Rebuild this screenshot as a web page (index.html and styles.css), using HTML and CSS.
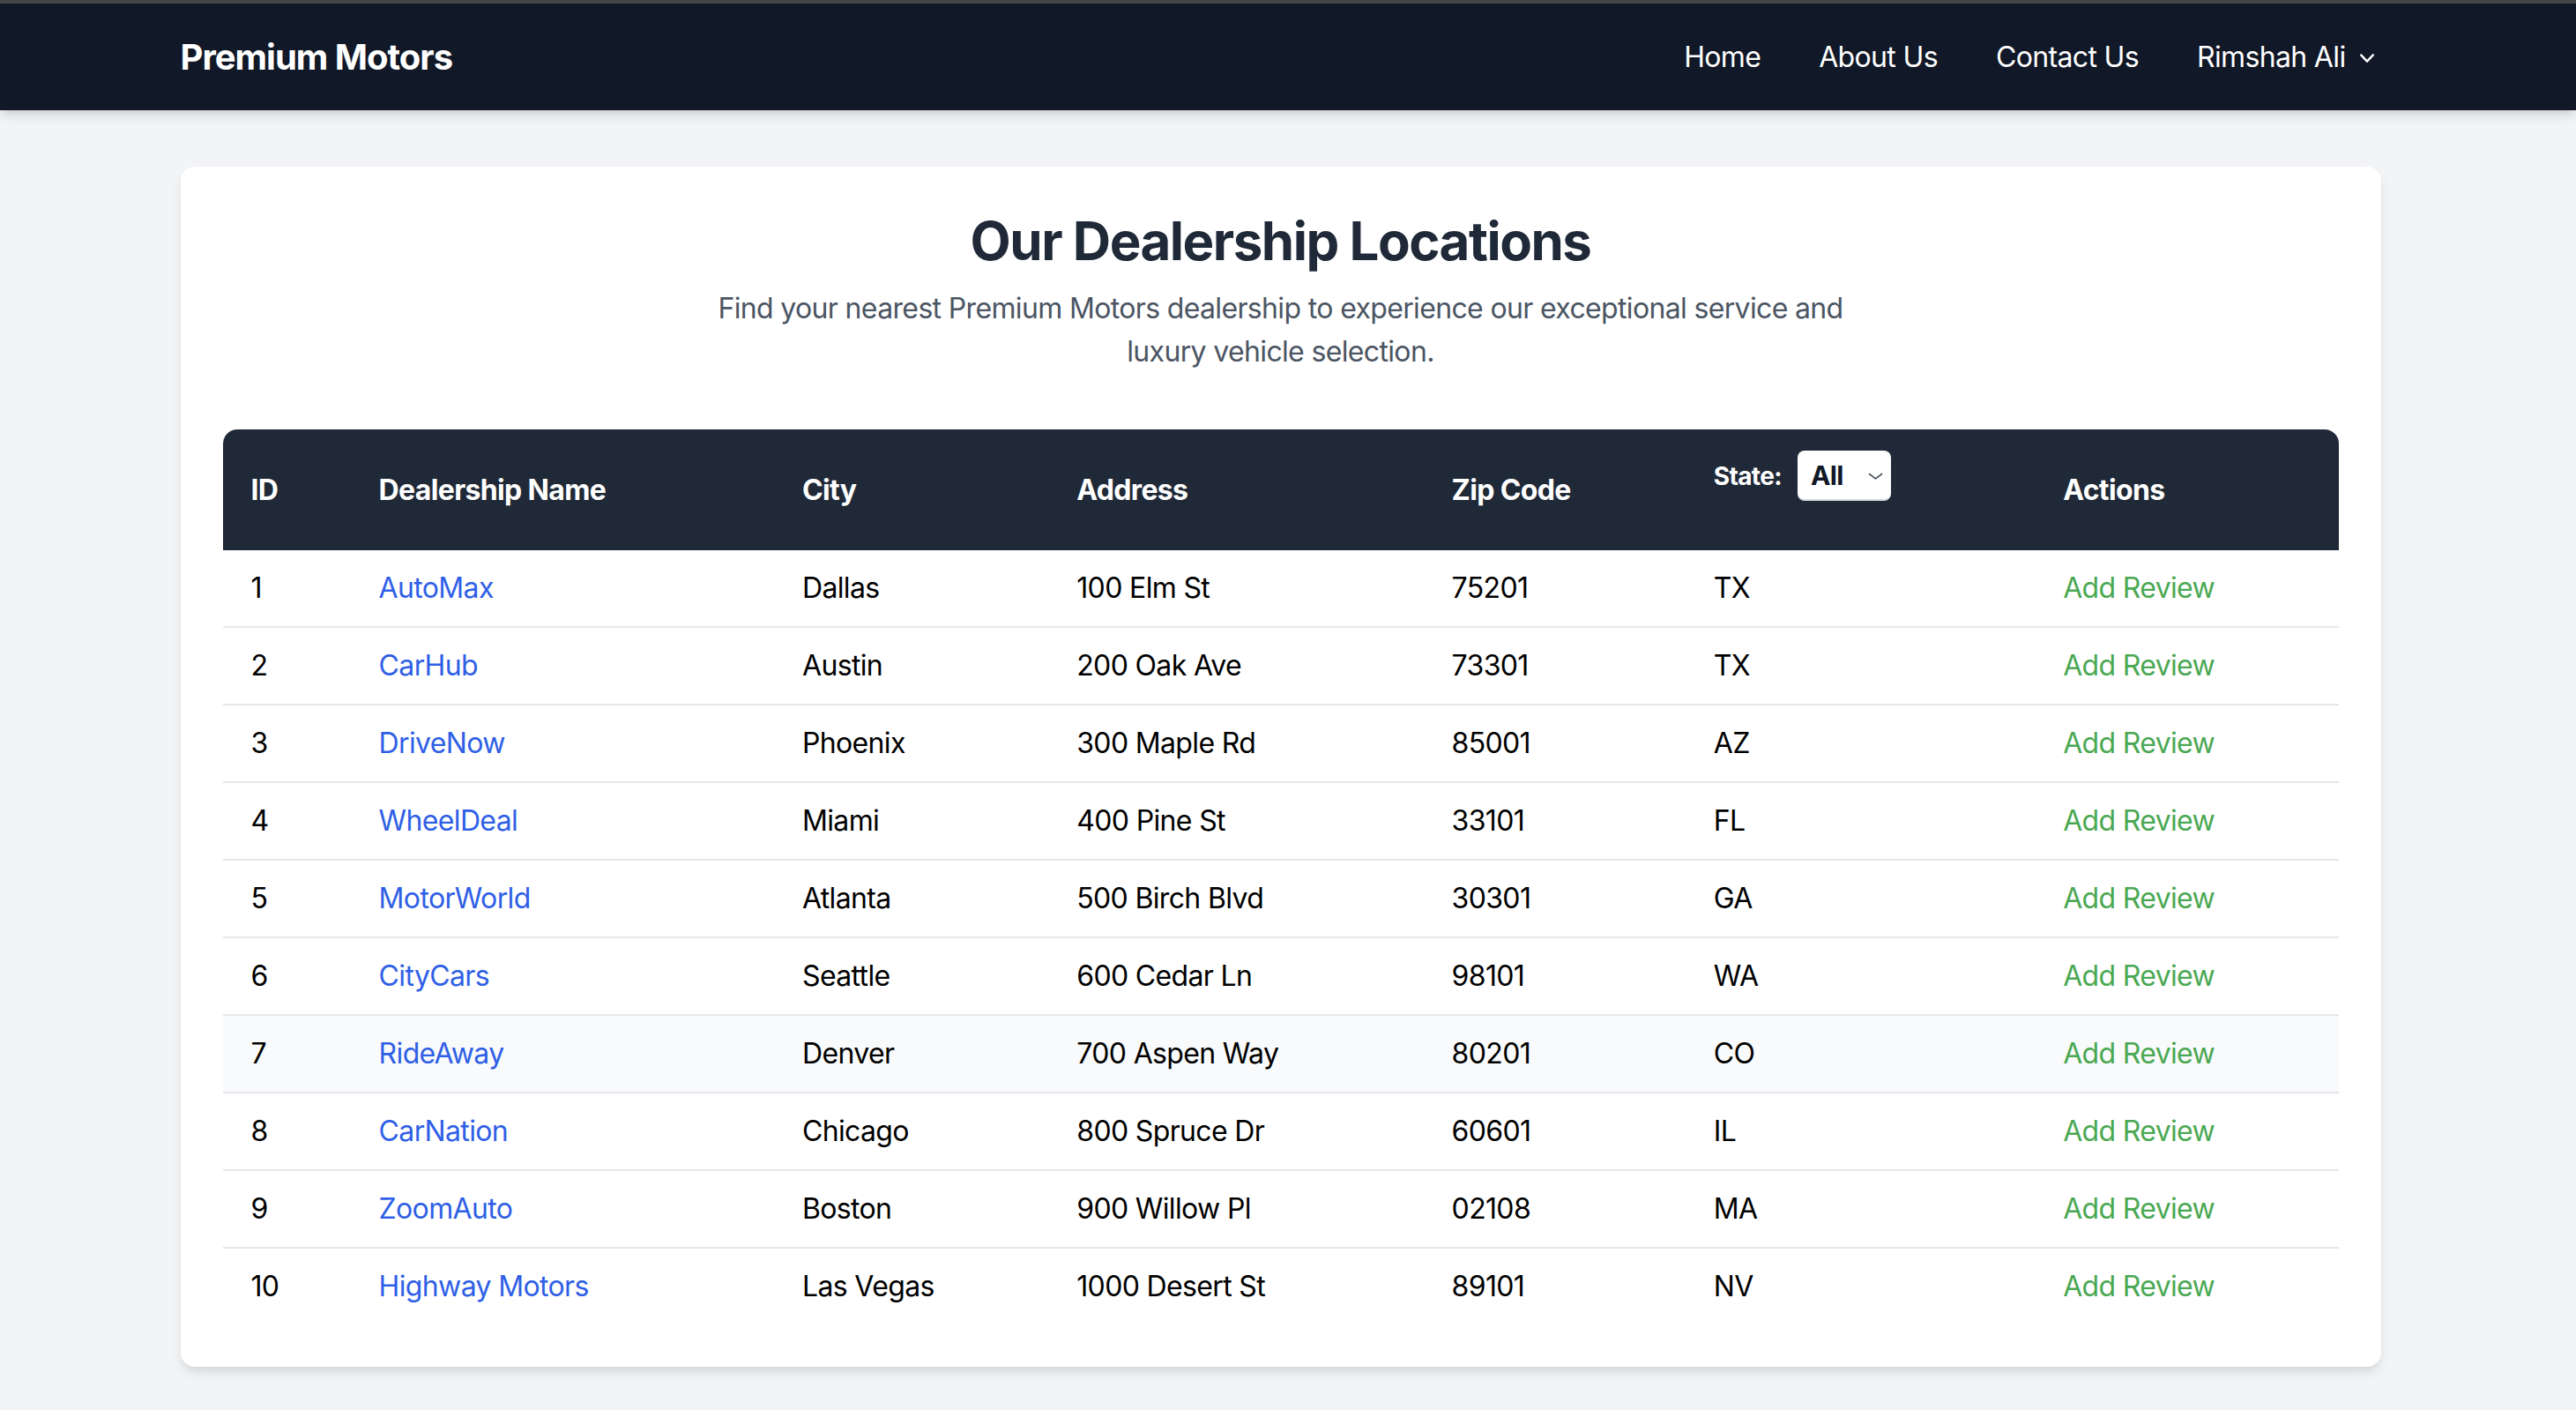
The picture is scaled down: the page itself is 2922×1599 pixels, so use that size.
FILE: index.html
```html
<!DOCTYPE html>
<html lang="en">
<head>
<meta charset="utf-8">
<title>Premium Motors - Dealerships</title>
<link rel="stylesheet" href="styles.css">
</head>
<body>
<header class="nav">
  <div class="frame">
    <div class="container nav-inner">
      <a class="brand" href="#">Premium Motors</a>
      <nav class="nav-links">
        <a href="#">Home</a>
        <a href="#">About Us</a>
        <a href="#">Contact Us</a>
        <a href="#" class="user">Rimshah Ali
          <svg class="chev" viewBox="0 0 20 20" fill="currentColor" aria-hidden="true"><path fill-rule="evenodd" d="M5.23 7.21a.75.75 0 011.06.02L10 11.168l3.71-3.938a.75.75 0 111.08 1.04l-4.25 4.5a.75.75 0 01-1.080 0l-4.25-4.5a.75.75 0 01.02-1.06z" clip-rule="evenodd"/></svg>
        </a>
      </nav>
    </div>
  </div>
</header>
<main class="frame">
  <div class="container main">
    <section class="card">
      <h1 class="title">Our Dealership Locations</h1>
      <p class="subtitle">Find your nearest Premium Motors dealership to experience our exceptional service and luxury vehicle selection.</p>
      <div class="table-wrap">
        <table class="dealers">
          <colgroup>
            <col class="c-id"><col class="c-name"><col class="c-city"><col class="c-addr"><col class="c-zip"><col class="c-state"><col class="c-act">
          </colgroup>
          <thead>
            <tr>
              <th>ID</th>
              <th>Dealership Name</th>
              <th>City</th>
              <th>Address</th>
              <th>Zip Code</th>
              <th>
                <div class="state-filter">
                  <label for="state">State:</label>
                  <span class="select-wrap">
                    <select id="state" class="select"><option>All</option><option>TX</option><option>AZ</option><option>FL</option><option>GA</option><option>WA</option><option>CO</option><option>IL</option><option>MA</option><option>NV</option></select>
                    <svg class="select-chev" viewBox="0 0 18 8" fill="none" stroke="currentColor" stroke-width="1.6" aria-hidden="true"><path d="M1 1l8 6 8-6"/></svg>
                  </span>
                </div>
              </th>
              <th>Actions</th>
            </tr>
          </thead>
          <tbody>
            <tr><td>1</td><td><a class="dlink" href="#">AutoMax</a></td><td>Dallas</td><td>100 Elm St</td><td>75201</td><td>TX</td><td><a class="review" href="#">Add Review</a></td></tr>
            <tr><td>2</td><td><a class="dlink" href="#">CarHub</a></td><td>Austin</td><td>200 Oak Ave</td><td>73301</td><td>TX</td><td><a class="review" href="#">Add Review</a></td></tr>
            <tr><td>3</td><td><a class="dlink" href="#">DriveNow</a></td><td>Phoenix</td><td>300 Maple Rd</td><td>85001</td><td>AZ</td><td><a class="review" href="#">Add Review</a></td></tr>
            <tr><td>4</td><td><a class="dlink" href="#">WheelDeal</a></td><td>Miami</td><td>400 Pine St</td><td>33101</td><td>FL</td><td><a class="review" href="#">Add Review</a></td></tr>
            <tr><td>5</td><td><a class="dlink" href="#">MotorWorld</a></td><td>Atlanta</td><td>500 Birch Blvd</td><td>30301</td><td>GA</td><td><a class="review" href="#">Add Review</a></td></tr>
            <tr><td>6</td><td><a class="dlink" href="#">CityCars</a></td><td>Seattle</td><td>600 Cedar Ln</td><td>98101</td><td>WA</td><td><a class="review" href="#">Add Review</a></td></tr>
            <tr class="hover"><td>7</td><td><a class="dlink" href="#">RideAway</a></td><td>Denver</td><td>700 Aspen Way</td><td>80201</td><td>CO</td><td><a class="review" href="#">Add Review</a></td></tr>
            <tr><td>8</td><td><a class="dlink" href="#">CarNation</a></td><td>Chicago</td><td>800 Spruce Dr</td><td>60601</td><td>IL</td><td><a class="review" href="#">Add Review</a></td></tr>
            <tr><td>9</td><td><a class="dlink" href="#">ZoomAuto</a></td><td>Boston</td><td>900 Willow Pl</td><td>02108</td><td>MA</td><td><a class="review" href="#">Add Review</a></td></tr>
            <tr><td>10</td><td><a class="dlink" href="#">Highway Motors</a></td><td>Las Vegas</td><td>1000 Desert St</td><td>89101</td><td>NV</td><td><a class="review" href="#">Add Review</a></td></tr>
          </tbody>
        </table>
      </div>
    </section>
  </div>
</main>
</body>
</html>
```
FILE: styles.css
```css
* { box-sizing: border-box; }

html, body {
  margin: 0;
  padding: 0;
}

body {
  background: #f3f4f6;
  font-family: Inter, "Noto Sans", "Liberation Sans", sans-serif;
  font-size: 32px;
  line-height: 48px;
  letter-spacing: -0.65px;
  color: #000;
  min-height: 1599px;
}

a { text-decoration: none; color: inherit; }

.frame {
  padding-right: 17px;
}

.container {
  max-width: 2560px;
  margin: 0 auto;
  padding: 0 32px;
}

/* Navbar */
.nav {
  background: #111827;
  border-top: 4px solid #454545;
  box-shadow: 0 8px 12px -2px rgba(0, 0, 0, 0.12), 0 4px 8px -4px rgba(0, 0, 0, 0.1);
  position: relative;
  z-index: 2;
}

.nav-inner {
  height: 121px;
  display: flex;
  align-items: center;
  justify-content: space-between;
}

.brand {
  color: #fff;
  font-size: 40px;
  line-height: 56px;
  font-weight: 700;
  letter-spacing: -1px;
}

.nav-links {
  display: flex;
  align-items: center;
  gap: 66px;
  color: #fff;
  font-size: 32px;
  line-height: 48px;
}

.user {
  display: flex;
  align-items: center;
}

.chev {
  width: 32px;
  height: 32px;
  margin-left: 8px;
  margin-top: 2px;
}

/* Main */
.main {
  padding-top: 64px;
  padding-bottom: 48px;
}

.card {
  background: #fff;
  border-radius: 16px;
  padding: 48px;
  box-shadow: 0 8px 14px -2px rgba(0, 0, 0, 0.1), 0 4px 8px -4px rgba(0, 0, 0, 0.08);
}

.title {
  margin: 0 0 16px;
  text-align: center;
  font-size: 60px;
  line-height: 72px;
  font-weight: 700;
  color: #1f2937;
  letter-spacing: -1.5px;
}

.subtitle {
  margin: 0 auto 64px;
  max-width: 1344px;
  text-align: center;
  color: #4b5563;
  font-size: 32px;
  line-height: 49px;
}

/* Table */
.table-wrap {
  border-radius: 16px;
  overflow: hidden;
}

.dealers {
  width: 100%;
  border-collapse: collapse;
  table-layout: fixed;
}

.c-id { width: 145px; }
.c-name { width: 480px; }
.c-city { width: 311px; }
.c-addr { width: 425px; }
.c-zip { width: 297px; }
.c-state { width: 396px; }
.c-act { width: 344px; }

.dealers thead tr {
  background: #1f2937;
}

.dealers th {
  color: #fff;
  text-align: left;
  font-weight: 700;
  font-size: 32px;
  line-height: 48px;
  padding: 24px 32px;
  vertical-align: middle;
}

.state-filter {
  display: flex;
  align-items: center;
  gap: 18px;
  margin-bottom: 32px;
}

.state-filter label {
  font-size: 28px;
  line-height: 40px;
  font-weight: 700;
}

.select-wrap {
  position: relative;
  display: inline-block;
  height: 57px;
}

.select {
  appearance: none;
  -webkit-appearance: none;
  width: 106px;
  height: 57px;
  padding: 0 40px 0 15px;
  border: none;
  border-bottom: 2px solid #d8dbe0;
  border-radius: 8px;
  background: #fff;
  color: #111827;
  font-family: inherit;
  font-size: 30px;
  font-weight: 700;
  letter-spacing: -0.6px;
  line-height: 57px;
}

.select-chev {
  position: absolute;
  right: 9px;
  top: 25px;
  width: 17px;
  height: 8px;
  color: #374151;
  pointer-events: none;
}

.dealers td {
  padding: 19px 32px;
  font-size: 32px;
  line-height: 48px;
  color: #000;
  border-bottom: 2px solid #e5e7eb;
  white-space: nowrap;
}

.dealers tbody tr:last-child td {
  border-bottom: none;
}

.dealers tr.hover td {
  background: #f9fafb;
}

.dlink {
  color: #2f5fe6;
}

.review {
  color: #4aa853;
}
```
